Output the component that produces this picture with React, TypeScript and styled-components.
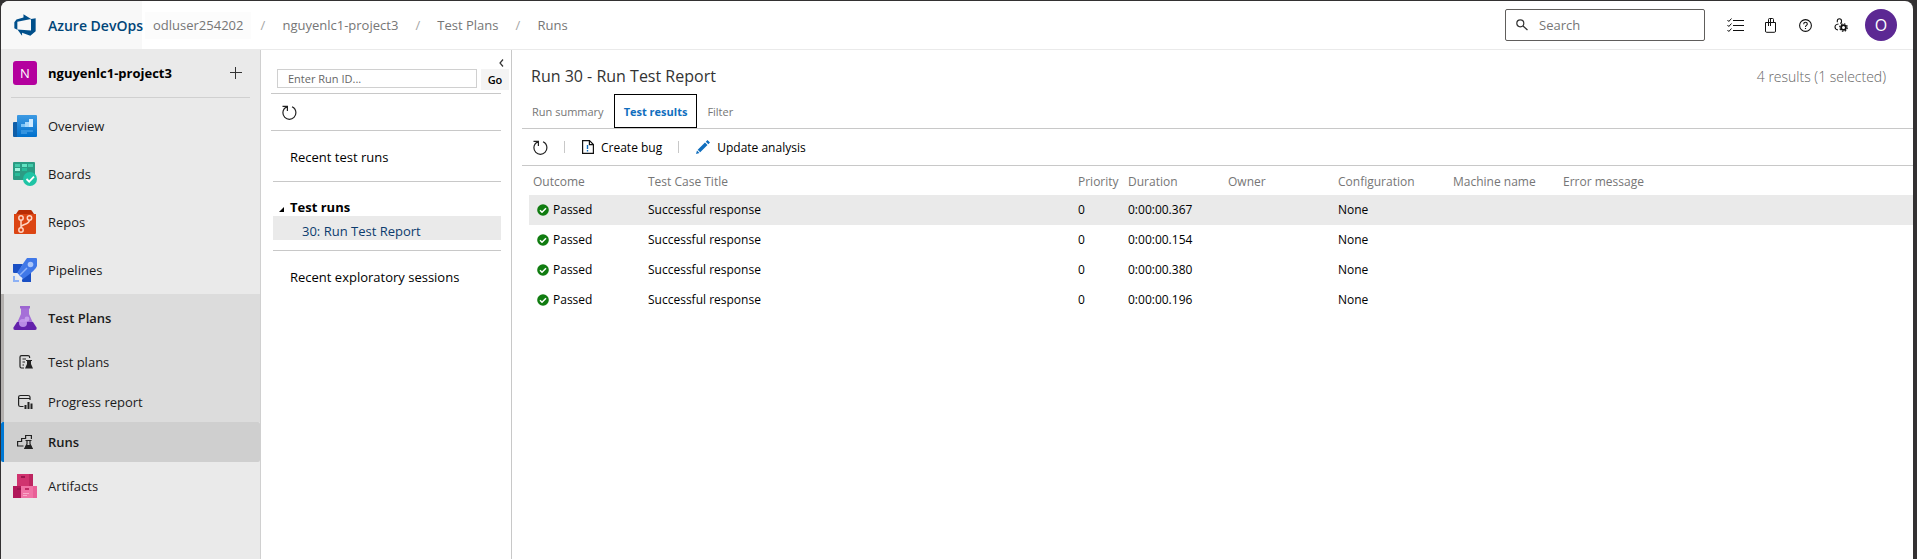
import React from "react";
import styled, { createGlobalStyle, css } from "styled-components";

const GlobalStyle = createGlobalStyle`
  * { box-sizing: border-box; }
  body { margin: 0; background: #333132; font-family: "Open Sans", "Noto Sans", sans-serif; font-size: 13px; color: #000; }
  button, input { font: inherit; color: inherit; }
  a { color: inherit; text-decoration: none; }
  svg { display: block; flex: none; }
`;

const Shell = styled.div`
  min-height: 100vh;
  padding: 1px 4px 0 1px;
  display: flex;
`;
const Frame = styled.div`
  flex: 1;
  min-width: 0;
  display: flex;
  flex-direction: column;
  background: #fff;
  border-radius: 8px 8px 0 0;
  overflow: hidden;
`;
const Header = styled.header`
  display: flex;
  align-items: center;
  height: 49px;
  border-bottom: 1px solid #eaeaea;
`;
const Brand = styled.a`
  align-self: stretch;
  display: flex;
  align-items: center;
  gap: 11px;
  width: 141px;
  padding-left: 12px;
  background: #f8f8f8;
  color: #004578;
  font-size: 14px;
  font-weight: 600;
  white-space: nowrap;
`;
const Crumbs = styled.nav`
  display: flex;
  align-items: center;
  flex: 1;
  margin-left: 3px;
  color: #767676;
`;
const Crumb = styled.a<{ $lit?: boolean }>`
  padding: 4px 8px;
  line-height: 19px;
  white-space: nowrap;
  background: ${(p) => (p.$lit ? "#fcfcfc" : "transparent")};
`;
const Slash = styled.span`
  width: 23px;
  text-align: center;
  color: #a6a6a6;
`;
const SearchBox = styled.label`
  display: flex;
  align-items: center;
  gap: 11px;
  width: 200px;
  height: 32px;
  padding: 0 10px;
  border: 1px solid #605e5c;
  border-radius: 2px;
`;
const SearchInput = styled.input`
  flex: 1;
  min-width: 0;
  border: 0;
  padding: 0;
  outline: 0;
  background: none;
  &::placeholder { color: #767676; opacity: 1; }
`;
const HeaderTools = styled.div`
  display: flex;
  align-items: center;
  margin: 0 16px 0 13px;
`;
const IconButton = styled.button`
  display: grid;
  place-items: center;
  width: 35px;
  height: 32px;
  padding: 0;
  border: 0;
  background: none;
`;
const Avatar = styled.button`
  width: 32px;
  height: 32px;
  margin-left: 7px;
  padding: 0;
  border: 0;
  border-radius: 50%;
  background: #5c2893;
  color: #fff;
  font-size: 16px;
`;
const Body = styled.div`
  flex: 1;
  display: flex;
`;

const Sidebar = styled.nav`
  width: 260px;
  flex: none;
  background: #eaeaea;
  border-right: 1px solid #d0d0d0;
`;
const Project = styled.div`
  display: flex;
  align-items: center;
  height: 48px;
  margin: 0 10px 4px;
  padding: 0 8px 1px 2px;
  border-bottom: 1px solid #d0d0d0;
  gap: 11px;
`;
const ProjectTile = styled.span`
  display: grid;
  place-items: center;
  width: 24px;
  height: 24px;
  border-radius: 3px;
  background: #b4009e;
  color: #fff;
`;
const ProjectName = styled.a`
  flex: 1;
  font-weight: 700;
`;
const PlusButton = styled.button`
  padding: 0;
  border: 0;
  background: none;
`;
const NavItem = styled.a<{ $open?: boolean; $sub?: boolean; $current?: boolean }>`
  display: flex;
  align-items: center;
  gap: 11px;
  height: ${(p) => (p.$sub ? 40 : 48)}px;
  padding-left: 9px;
  border-left: 3px solid transparent;
  color: #1b1b1b;
  ${(p) => (p.$open || p.$sub) && css`background: #dcdcdc; border-color: #b3b0ae;`}
  ${(p) => p.$current && css`background: #cfcfcf; border-color: #0078d4; border-radius: 2px;`}
  font-weight: ${(p) => (p.$open || p.$current ? 600 : 400)};
`;

const RunsPanel = styled.aside`
  width: 251px;
  flex: none;
  padding: 6px 10px 0;
  border-right: 1px solid #c8c8c8;
`;
const Collapse = styled.button`
  display: block;
  margin-left: auto;
  margin-right: -4px;
  padding: 2px 0;
  width: 6px;
  height: 13px;
  border: 0;
  background: none;
`;
const RunForm = styled.form`
  display: flex;
  gap: 4px;
  margin-right: -8px;
  padding: 0 0 3px 6px;
`;
const RunInput = styled.input`
  flex: 1;
  min-width: 0;
  height: 19px;
  padding: 0 10px;
  border: 1px solid #d0d0d0;
  font-size: 11px;
  &::placeholder { color: #666; opacity: 1; }
`;
const GoButton = styled.button`
  width: 28px;
  height: 21px;
  padding: 0;
  border: 0;
  background: #f4f4f4;
  font-size: 11px;
  font-weight: 600;
`;
const RunTools = styled.div`
  height: 38px;
  padding-left: 11px;
  display: flex;
  align-items: center;
  border: solid #c8c8c8;
  border-width: 1px 0;
`;
const Section = styled.section`
  margin-left: 2px;
  border-bottom: 1px solid #c8c8c8;
  &:last-child { border-bottom: 0; }
`;
const SectionLink = styled.a`
  display: flex;
  align-items: center;
  height: 50px;
  padding: 1px 0 0 17px;
`;
const TreeHead = styled.div`
  display: flex;
  align-items: flex-end;
  gap: 6px;
  height: 34px;
  padding: 0 0 0 6px;
  font-weight: 700;
  line-height: 18px;
`;
const TreeItem = styled.a`
  display: block;
  height: 24px;
  margin-bottom: 10px;
  padding: 3px 0 0 29px;
  background: #eaeaea;
  color: #0c3c6e;
  line-height: 24px;
`;

const Main = styled.main`
  flex: 1;
  min-width: 0;
  padding-left: 10px;
`;
const TitleBar = styled.div`
  display: flex;
  align-items: center;
  justify-content: space-between;
  height: 44px;
  padding: 8px 27px 0 9px;
`;
const Title = styled.h1`
  margin: 0;
  font-size: 16px;
  font-weight: 400;
  color: #333;
`;
const Count = styled.span`
  font-size: 14px;
  font-weight: 300;
  color: #666;
`;
const Tabs = styled.div`
  display: flex;
  height: 35px;
  border-bottom: 1px solid #c8c8c8;
`;
const Tab = styled.button<{ $active?: boolean }>`
  height: 34px;
  padding: 0 10px;
  border: 0;
  background: none;
  font-size: 11px;
  color: #767676;
  ${(p) => p.$active && css`padding: 0 9px; border: 1px solid #000; color: #106ebe; font-weight: 700;`}
`;
const Toolbar = styled.div`
  display: flex;
  align-items: center;
  height: 37px;
  padding-left: 11px;
  border-bottom: 1px solid #c8c8c8;
`;
const ToolButton = styled.button`
  display: flex;
  align-items: center;
  gap: 7px;
  padding: 0;
  border: 0;
  background: none;
  font-size: 12px;
`;
const Separator = styled.span`
  width: 1px;
  height: 12px;
  margin: 0 17px 0 16px;
  background: #c8c8c8;
`;
const Results = styled.table`
  width: calc(100% - 7px);
  margin-left: 7px;
  table-layout: fixed;
  border-collapse: collapse;
  font-size: 12px;
  th, td { padding: 0 4px; text-align: left; white-space: nowrap; }
  th { height: 29px; padding-top: 2px; font-weight: 400; color: #767676; }
  td { height: 30px; padding-bottom: 1px; }
`;
const Row = styled.tr<{ $selected?: boolean }>`
  background: ${(p) => (p.$selected ? "#eaeaea" : "#fff")};
`;
const Outcome = styled.span`
  display: flex;
  align-items: center;
  gap: 4px;
  padding-left: 4px;
`;

const RefreshIcon = () => (
  <svg width="15" height="15" viewBox="0 0 15 15" fill="none" stroke="#222" strokeWidth="1.2">
    <path d="M.5 1.400H5.400V6M5.200 1.700C2.600 2.700.900 5 .900 7.800a6.500 6.500 0 0 0 13 0C13.900 5 12.300 2.800 10 1.800" />
  </svg>
);
const LogoIcon = () => (
  <svg width="24" height="24" viewBox="0 0 18 18" fill="#004f8b">
    <path d="M17 4v9.740l-4 3.280-6.200-2.260V17l-3.510-4.590 10.230.800V4.440zM13.590 4.490 7.850 1v2.290L2.580 4.840 1 6.870v4.610l2.260 1V6.570z" />
  </svg>
);
const OverviewIcon = () => (
  <svg width="24" height="24" viewBox="0 0 24 24">
    <defs><linearGradient id="ov" x2="0" y2="1"><stop stopColor="#3d9ae3" /><stop offset="1" stopColor="#0070cc" /></linearGradient></defs>
    <path d="M1 8H5V23H1a1 1 0 0 1-1-1V9a1 1 0 0 1 1-1Z" fill="#0f5ea8" />
    <path d="M5 1H23a1 1 0 0 1 1 1V22a1 1 0 0 1-1 1H4V2a1 1 0 0 1 1-1Z" fill="url(#ov)" />
    <path d="M8 10H12V13H8Z" fill="#7cc4f7" /><path d="M12 8H16V13H12Z" fill="#a5d7fb" /><path d="M16 5H20V13H16Z" fill="#d0ebff" />
    <path d="M8 16H20V18H8ZM8 18H14V20H8Z" fill="#3494e0" />
  </svg>
);
const BoardsIcon = () => (
  <svg width="24" height="24" viewBox="0 0 24 24">
    <rect width="22" height="18" rx="1" fill="#2b9c84" />
    <path d="M2 2H7V5H2ZM15 2H20V5H15Z" fill="#42cbaa" /><path d="M9 2H14V5H9Z" fill="#63e3c2" />
    <path d="M2 6H7V9H2Z" fill="#9ff5de" /><path d="M9 6H14V9H9ZM2 11H7V14H2Z" fill="#28bd9a" />
    <circle cx="17" cy="17" r="7" fill="#1fc4a5" />
    <path d="m13.500 17 2.700 2.700 4.800-5" fill="none" stroke="#fff" strokeWidth="1.800" />
  </svg>
);
const ReposIcon = () => (
  <svg width="24" height="24" viewBox="0 0 24 24">
    <path d="M3 4 5 1Q5.500 0 6.500 0H17.500Q18.500 0 19 1L21 4Z" fill="#b92d05" />
    <path d="M1 4H23V23a1 1 0 0 1-1 1H2a1 1 0 0 1-1-1Z" fill="#dc4513" />
    <g fill="none" stroke="#ffd5c4" strokeWidth="1.500"><circle cx="8" cy="8" r="2.200" /><circle cx="16.500" cy="8" r="2.200" /><circle cx="8" cy="20" r="2.200" /><path d="M8 10V18M8 17C8 14 16.500 15 16.500 10" /></g>
  </svg>
);
const PipelinesIcon = () => (
  <svg width="24" height="24" viewBox="0 0 24 24">
    <path d="M0 6H10L5 15H1a1 1 0 0 1-1-1ZM18 14V24H10a1 1 0 0 1-1-1V18Z" fill="#194fc4" />
    <path d="M14 0H23a1 1 0 0 1 1 1V8Q23 12 10 21L4 15Q11 4 14 0Z" fill="#4078e8" />
    <circle cx="17.500" cy="6.500" r="2.800" fill="#a9c5fa" />
    <path d="m7 17 7-7" stroke="#91b4f8" strokeWidth="1.500" />
    <path d="m4 15 2 2-1 2 3 0 2 2-2 1-5-5Z" fill="#e3edff" />
    <path d="M0 18H2V22H6V24H0Z" fill="#8db1f5" />
  </svg>
);
const TestPlansIcon = () => (
  <svg width="24" height="24" viewBox="0 0 24 24">
    <path d="M8 2H16V8L20 17H4L8 8Z" fill="#a56fd8" /><path d="M7 0H17V2.500H7Z" fill="#9c66d0" />
    <path d="M4 16H20L23.500 21.500Q24 24 22 24H2Q0 24 .5 21.500Z" fill="#6321ab" />
    <circle cx="10" cy="17" r="4" fill="#c69cee" opacity=".85" /><circle cx="14" cy="13" r="2.400" fill="#c9a5ee" opacity=".85" />
  </svg>
);
const ArtifactsIcon = () => (
  <svg width="24" height="24" viewBox="0 0 24 24">
    <path d="M4 0H20V12H4Z" fill="#d0336f" /><path d="M16 0H20V12H16Z" fill="#bd2560" /><path d="M0 12H8V24H0Z" fill="#b0185a" /><path d="M8 12H24V24H8Z" fill="#f072a5" />
    <path d="M20 12H24V24H20Z" fill="#e95f97" /><path d="M8 2H12V4H8ZM4 14H8V16H4Z" fill="#99164d" /><path d="M12 14H16V16H12Z" fill="#c02864" /><path d="M10 19H16V20H10ZM10 21H14V22H10Z" fill="#f9a8c8" />
  </svg>
);
const PlanIcon = () => (
  <svg width="24" height="16" viewBox="0 0 24 16" fill="none" stroke="#222" strokeWidth="1.200">
    <path d="M11 14H8.500Q7 14 7 12.500V3Q7 1.600 8.500 1.600H15Q16.600 1.600 16.600 3V4M9.500 5H13M9.500 8H12M9.500 11H11" />
    <path d="M13 6H19V7H18V10L20 14.500H12L14 10V7H13Z" fill="#222" stroke="none" />
  </svg>
);
const ProgressIcon = () => (
  <svg width="24" height="16" viewBox="0 0 24 16" fill="none" stroke="#222" strokeWidth="1.200">
    <path d="M10.500 12.500H7.500Q5.600 12.500 5.600 11V3Q5.600 1.500 7.500 1.500H15Q17 1.500 17 3V6M6 4.500H17" />
    <path d="M12.500 11V15M15.500 8V15M18.500 9.500V15" strokeWidth="2" />
  </svg>
);
const RunsIcon = () => (
  <svg width="24" height="16" viewBox="0 0 24 16" fill="none" stroke="#222" strokeWidth="1.200">
    <path d="M10.500 12H4.600V7.500H8.600V4.500H12.600V1.500H18.400V5M12.500 6.500H18.500M14 7V10L12 14.500H19L17 10V7" />
    <path d="M13.500 11.500H17.500L19 14.500H12Z" fill="#222" />
  </svg>
);
const PlusIcon = () => (
  <svg width="12" height="12" viewBox="0 0 12 12" stroke="#333"><path d="M0 5.500H12M5.500 0V12" /></svg>
);
const ChevronIcon = () => (
  <svg width="5" height="8" viewBox="0 0 5 8" fill="none" stroke="#333" strokeWidth="1.200"><path d="M4 .5 1 4 4 7.500" /></svg>
);
const SearchIcon = () => (
  <svg width="12" height="12" viewBox="0 0 12 12" fill="none" stroke="#333" strokeWidth="1.200"><circle cx="4.300" cy="4.300" r="3.500" /><path d="m7 7 4.500 4" /></svg>
);
const ChecklistIcon = () => (
  <svg width="17" height="15" viewBox="0 0 17 15" fill="none" stroke="#111"><path d="M6 2.500H17M6 7.500H17M6 12.500H17M.5 2l1.300 1.500L4.500.5M.5 7l1.300 1.500L4.500 5.500M.5 12l1.300 1.500 2.700-3" /></svg>
);
const BagIcon = () => (
  <svg width="11" height="15" viewBox="0 0 11 15" fill="none" stroke="#111"><path d="M.5 4.500H10.500V13Q10.500 14.300 9.500 14.300H1.500Q.5 14.300.5 13ZM3.500 8V1.500Q3.500.5 4.500.5H7.500Q8.500.5 8.500 1.500V4.500M5.500.5V8" /></svg>
);
const HelpIcon = () => (
  <svg width="13" height="13" viewBox="0 0 13 13" fill="none" stroke="#111" strokeWidth="1.100"><circle cx="6.500" cy="6.500" r="5.900" /><path d="M4.700 5.200Q4.700 3.300 6.500 3.300T8.300 5Q8.300 5.800 7.400 6.400T6.500 8M6.500 8.900V10.100" /></svg>
);
const UserSettingsIcon = () => (
  <svg width="14" height="14" viewBox="0 0 14 14" fill="none" stroke="#111" strokeWidth="1.100">
    <path d="M3.300 4.300V2.800a2.100 2.100 0 0 1 4.200 0V4.300L6.300 5.500M4.500 6Q1 6.500 1 9T4 12" />
    <circle cx="9.500" cy="9.500" r="2.400" strokeWidth="1.800" /><circle cx="9.500" cy="9.500" r="3.800" strokeWidth="1.200" strokeDasharray="1.500 1.480" />
  </svg>
);
const BugFileIcon = () => (
  <svg width="12" height="14" viewBox="0 0 12 14" fill="none" stroke="#111" strokeWidth="1.200"><path d="M.6.600H7.500L11.400 4.500V13.400H.6ZM7.400.6V4.600H11.400" /><path d="M5.500 5V9M5.500 10V11.500" stroke="#106ebe" strokeWidth="1.400" /></svg>
);
const PencilIcon = () => (
  <svg width="14" height="14" viewBox="0 0 14 14" fill="#106ebe"><path d="M0 14 1 10.500 3.500 13ZM1.700 9.800 9 2.500 11.500 5 4.200 12.300ZM9.800 1.700 11.500 0 14 2.500 12.300 4.200Z" /></svg>
);
const PassedIcon = () => (
  <svg width="12" height="12" viewBox="0 0 12 12"><circle cx="6" cy="6" r="5.800" fill="#107c10" /><path d="m3 6.200 2 2 4-4" fill="none" stroke="#fff" strokeWidth="1.500" /></svg>
);
const TriangleIcon = () => (
  <svg width="5" height="12" viewBox="0 0 5 12"><path d="M5 3V8H0Z" /></svg>
);

const navTop = [
  { label: "Overview", icon: <OverviewIcon /> },
  { label: "Boards", icon: <BoardsIcon /> },
  { label: "Repos", icon: <ReposIcon /> },
  { label: "Pipelines", icon: <PipelinesIcon /> },
];
const durations = ["0:00:00.367", "0:00:00.154", "0:00:00.380", "0:00:00.196"];
const columns = [
  { label: "Outcome", width: 115 },
  { label: "Test Case Title", width: 430 },
  { label: "Priority", width: 50 },
  { label: "Duration", width: 100 },
  { label: "Owner", width: 110 },
  { label: "Configuration", width: 115 },
  { label: "Machine name", width: 110 },
  { label: "Error message", width: undefined },
];

export default function App() {
  return (
    <Shell>
      <GlobalStyle />
      <Frame>
        <Header>
          <Brand href="#"><LogoIcon />Azure DevOps</Brand>
          <Crumbs aria-label="Breadcrumb">
            <Crumb href="#" $lit>odluser254202</Crumb>
            <Slash>/</Slash>
            <Crumb href="#">nguyenlc1-project3</Crumb>
            <Slash>/</Slash>
            <Crumb href="#">Test Plans</Crumb>
            <Slash>/</Slash>
            <Crumb href="#">Runs</Crumb>
          </Crumbs>
          <SearchBox>
            <SearchIcon />
            <SearchInput type="text" placeholder="Search" aria-label="Search" />
          </SearchBox>
          <HeaderTools>
            <IconButton aria-label="Work items"><ChecklistIcon /></IconButton>
            <IconButton aria-label="Marketplace"><BagIcon /></IconButton>
            <IconButton aria-label="Help"><HelpIcon /></IconButton>
            <IconButton aria-label="User settings"><UserSettingsIcon /></IconButton>
            <Avatar aria-label="Account">O</Avatar>
          </HeaderTools>
        </Header>
        <Body>
          <Sidebar>
            <Project>
              <ProjectTile>N</ProjectTile>
              <ProjectName href="#">nguyenlc1-project3</ProjectName>
              <PlusButton aria-label="Add"><PlusIcon /></PlusButton>
            </Project>
            {navTop.map((n) => (
              <NavItem key={n.label} href="#">{n.icon}{n.label}</NavItem>
            ))}
            <NavItem href="#" $open><TestPlansIcon />Test Plans</NavItem>
            <NavItem href="#" $sub><PlanIcon />Test plans</NavItem>
            <NavItem href="#" $sub><ProgressIcon />Progress report</NavItem>
            <NavItem href="#" $sub $current><RunsIcon />Runs</NavItem>
            <NavItem href="#"><ArtifactsIcon />Artifacts</NavItem>
          </Sidebar>
          <RunsPanel>
            <Collapse aria-label="Collapse panel"><ChevronIcon /></Collapse>
            <RunForm>
              <RunInput type="text" placeholder="Enter Run ID..." aria-label="Run ID" />
              <GoButton type="button">Go</GoButton>
            </RunForm>
            <RunTools>
              <ToolButton aria-label="Refresh runs"><RefreshIcon /></ToolButton>
            </RunTools>
            <Section><SectionLink href="#">Recent test runs</SectionLink></Section>
            <Section>
              <TreeHead><TriangleIcon />Test runs</TreeHead>
              <TreeItem href="#">30: Run Test Report</TreeItem>
            </Section>
            <Section><SectionLink href="#">Recent exploratory sessions</SectionLink></Section>
          </RunsPanel>
          <Main>
            <TitleBar>
              <Title>Run 30 - Run Test Report</Title>
              <Count>4 results (1 selected)</Count>
            </TitleBar>
            <Tabs role="tablist">
              <Tab role="tab">Run summary</Tab>
              <Tab role="tab" aria-selected $active>Test results</Tab>
              <Tab role="tab">Filter</Tab>
            </Tabs>
            <Toolbar>
              <ToolButton aria-label="Refresh results"><RefreshIcon /></ToolButton>
              <Separator />
              <ToolButton><BugFileIcon />Create bug</ToolButton>
              <Separator />
              <ToolButton><PencilIcon />Update analysis</ToolButton>
            </Toolbar>
            <Results>
              <colgroup>{columns.map((c) => <col key={c.label} width={c.width} />)}</colgroup>
              <thead><tr>{columns.map((c) => <th key={c.label} scope="col">{c.label}</th>)}</tr></thead>
              <tbody>
                {durations.map((d, i) => (
                  <Row key={d} $selected={i === 0}>
                    <td><Outcome><PassedIcon />Passed</Outcome></td>
                    <td>Successful response</td>
                    <td>0</td>
                    <td>{d}</td>
                    <td />
                    <td>None</td>
                    <td />
                    <td />
                  </Row>
                ))}
              </tbody>
            </Results>
          </Main>
        </Body>
      </Frame>
    </Shell>
  );
}
